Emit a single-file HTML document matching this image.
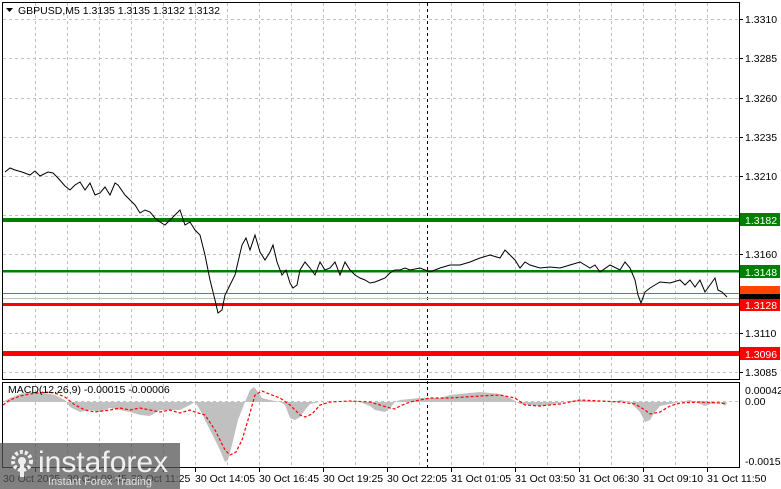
<!DOCTYPE html>
<html><head><meta charset="utf-8"><style>
html,body{margin:0;padding:0;background:#fff;}
svg{display:block;font-family:"Liberation Sans",sans-serif;}
</style></head><body>
<svg width="781" height="489" viewBox="0 0 781 489" xmlns="http://www.w3.org/2000/svg">
<rect width="781" height="489" fill="#fff"/>
<!-- grid main -->
<g stroke="#c0c0c0" stroke-width="1" stroke-dasharray="3,3" fill="none">
<path d="M3 19.5H739 M3 58.5H739 M3 98.5H739 M3 137.5H739 M3 176.5H739 M3 215.5H739 M3 254.5H739 M3 293.5H739 M3 333.5H739 M3 372.5H739"/>
<path d="M35.5 3V380 M67.5 3V380 M99.5 3V380 M131.5 3V380 M163.5 3V380 M195.5 3V380 M227.5 3V380 M259.5 3V380 M291.5 3V380 M323.5 3V380 M355.5 3V380 M387.5 3V380 M419.5 3V380 M451.5 3V380 M483.5 3V380 M515.5 3V380 M547.5 3V380 M579.5 3V380 M611.5 3V380 M643.5 3V380 M675.5 3V380 M707.5 3V380"/>
<path d="M35.5 384V467 M67.5 384V467 M99.5 384V467 M131.5 384V467 M163.5 384V467 M195.5 384V467 M227.5 384V467 M259.5 384V467 M291.5 384V467 M323.5 384V467 M355.5 384V467 M387.5 384V467 M419.5 384V467 M451.5 384V467 M483.5 384V467 M515.5 384V467 M547.5 384V467 M579.5 384V467 M611.5 384V467 M643.5 384V467 M675.5 384V467 M707.5 384V467 M3 401.5H739"/>
</g>
<path d="M427.5 3V467" stroke="#000" stroke-dasharray="3,3"/>
<!-- level lines -->
<rect x="3" y="218" width="736" height="4" fill="#007f00"/>
<rect x="3" y="270" width="736" height="2.5" fill="#007f00"/>
<rect x="3" y="293" width="736" height="1" fill="#ff4500"/>
<rect x="3" y="298" width="736" height="1" fill="#c0c0c0"/>
<rect x="3" y="303" width="736" height="3" fill="#ff0000"/>
<rect x="3" y="351" width="736" height="5" fill="#ff0000"/>
<!-- price -->
<polyline fill="none" stroke="#000" stroke-width="1" points="5,172 10,168 15,170 22,172 30,175 35,171 40,176 48,172 53,173 58,178 65,186 70,190 75,185 80,182 85,190 90,183 95,195 100,193 105,187 110,195 115,183 118,185 125,195 130,200 135,205 140,213 145,210 150,212 155,218 160,222 165,225 170,220 175,215 180,210 185,225 190,222 195,230 200,235 205,255 210,280 215,300 218,313 222,310 225,295 230,285 235,275 238,262 242,245 246,238 250,250 255,235 260,252 265,260 270,252 273,245 277,262 282,275 286,270 290,283 293,288 297,285 300,270 305,262 310,268 315,275 320,262 325,270 330,268 335,262 340,275 345,262 350,270 355,275 360,278 365,280 370,283 375,282 380,280 385,278 390,273 395,270 400,270 405,268 410,270 420,268 425,270 430,272 440,268 450,265 460,265 470,262 480,258 490,255 500,258 505,250 510,255 515,260 520,268 525,262 530,265 540,268 550,267 560,268 570,265 580,262 590,268 595,265 600,272 610,265 620,270 625,262 630,268 635,280 638,295 641,303 645,292 650,288 655,285 660,282 670,283 680,280 685,285 690,280 695,287 700,280 705,292 710,285 715,278 718,290 722,292 727,297"/>
<!-- MACD -->
<polygon fill="#c0c0c0" points="3,402 10,398 20,394 30,392 45,393 55,395 65,400 70,407 80,412 90,410 100,412 110,408 120,410 130,412 140,415 150,416 160,410 170,410 180,410 190,405 195,402 200,410 210,430 220,450 225,462 228,460 232,445 238,420 245,402 250,390 254,387 258,392 262,398 270,400 280,402 285,405 290,418 295,420 300,417 305,410 310,404 320,402 360,402 370,406 375,410 385,412 390,408 395,402 400,400 420,398 440,398 450,395 460,394 470,393 480,392 490,393 500,394 510,398 520,404 530,405 540,406 550,405 560,403 570,401 580,400 600,402 615,402 620,400 630,402 640,412 645,422 650,420 655,412 660,406 670,404 680,402 690,400 700,404 705,406 710,404 720,402 725,406 727,402"/>
<polyline fill="none" stroke="#ff0000" stroke-width="1.2" stroke-dasharray="3,2" points="3,405 10,400 20,396 30,394 45,392 55,393 65,397 75,405 85,410 95,412 110,410 120,408 130,410 140,408 150,410 160,412 170,410 180,413 190,410 195,412 205,415 215,430 225,450 230,455 236,452 242,440 248,420 255,395 262,391 272,395 280,398 290,405 300,415 305,417 312,414 320,405 330,402 350,401 370,402 380,405 390,408 395,409 400,406 410,402 430,398 450,398 480,396 500,395 515,398 525,405 540,406 560,404 580,400 600,401 620,402 635,404 645,410 650,414 660,412 670,406 680,403 700,402 720,403 727,404"/>
<!-- frames -->
<g fill="none" stroke="#000" stroke-width="1">
<rect x="2.5" y="2.5" width="737" height="377"/>
<rect x="2.5" y="382.5" width="737" height="85"/>
</g>
<!-- title -->
<path d="M6 8h7l-3.5 4z" fill="#000"/>
<text x="18" y="14" font-size="10.5" fill="#000">GBPUSD,M5  1.3135 1.3135 1.3132 1.3132</text>
<text x="8" y="393" font-size="10.5" fill="#000">MACD(12,26,9) -0.00015 -0.00006</text>
<!-- right axis -->
<g font-size="10.5" fill="#000">
<text x="745" y="23">1.3310</text>
<text x="745" y="62">1.3285</text>
<text x="745" y="102">1.3260</text>
<text x="745" y="141">1.3235</text>
<text x="745" y="180">1.3210</text>
<text x="745" y="258">1.3160</text>
<text x="745" y="337">1.3110</text>
<text x="745" y="376">1.3085</text>
<text x="745" y="394">0.00042</text>
<text x="745" y="405">0.00</text>
<text x="745" y="465">-0.00159</text>
</g>
<g stroke="#000"><path d="M739 19.5h4M739 58.5h4M739 98.5h4M739 137.5h4M739 176.5h4M739 254.5h4M739 333.5h4M739 372.5h4"/></g>
<rect x="740" y="213" width="40" height="13" fill="#007f00"/><text x="745" y="224" font-size="10.5" fill="#fff">1.3182</text>
<rect x="740" y="265" width="40" height="13" fill="#007f00"/><text x="745" y="276" font-size="10.5" fill="#fff">1.3148</text>
<rect x="740" y="286" width="40" height="8" fill="#ff4500"/>
<rect x="740" y="294" width="40" height="5" fill="#000"/>
<rect x="740" y="299" width="40" height="12" fill="#ff0000"/><text x="745" y="309" font-size="10.5" fill="#fff">1.3128</text>
<rect x="740" y="347" width="40" height="13" fill="#ff0000"/><text x="745" y="358" font-size="10.5" fill="#fff">1.3096</text>
<!-- time axis -->
<g stroke="#000"><path d="M35.5 468v4M99.5 468v4M163.5 468v4M195.5 468v4M259.5 468v4M323.5 468v4M387.5 468v4M451.5 468v4M515.5 468v4M579.5 468v4M643.5 468v4M707.5 468v4"/></g>
<g font-size="10.5" fill="#000">
<text x="3" y="482">30 Oct 2025</text>
<text x="67" y="482">30 Oct 08:45</text>
<text x="131" y="482">30 Oct 11:25</text>
<text x="195" y="482">30 Oct 14:05</text>
<text x="259" y="482">30 Oct 16:45</text>
<text x="323" y="482">30 Oct 19:25</text>
<text x="387" y="482">30 Oct 22:05</text>
<text x="451" y="482">31 Oct 01:05</text>
<text x="515" y="482">31 Oct 03:50</text>
<text x="579" y="482">31 Oct 06:30</text>
<text x="643" y="482">31 Oct 09:10</text>
<text x="707" y="482">31 Oct 11:50</text>
</g>
<!-- watermark -->
<rect x="0" y="443" width="180" height="46" fill="#555" opacity="0.75"/>
<g fill="#eee">
<circle cx="22" cy="461" r="9" fill="none" stroke="#eee" stroke-width="4" stroke-dasharray="3,2"/>
<circle cx="22" cy="461" r="4"/>
<rect x="20" y="463" width="4" height="14"/>
</g>
<text x="38" y="472" font-size="30" fill="#f0f0f0">instaforex</text>
<text x="48" y="485" font-size="11" fill="#e0e0e0">Instant Forex Trading</text>
</svg>
</body></html>
